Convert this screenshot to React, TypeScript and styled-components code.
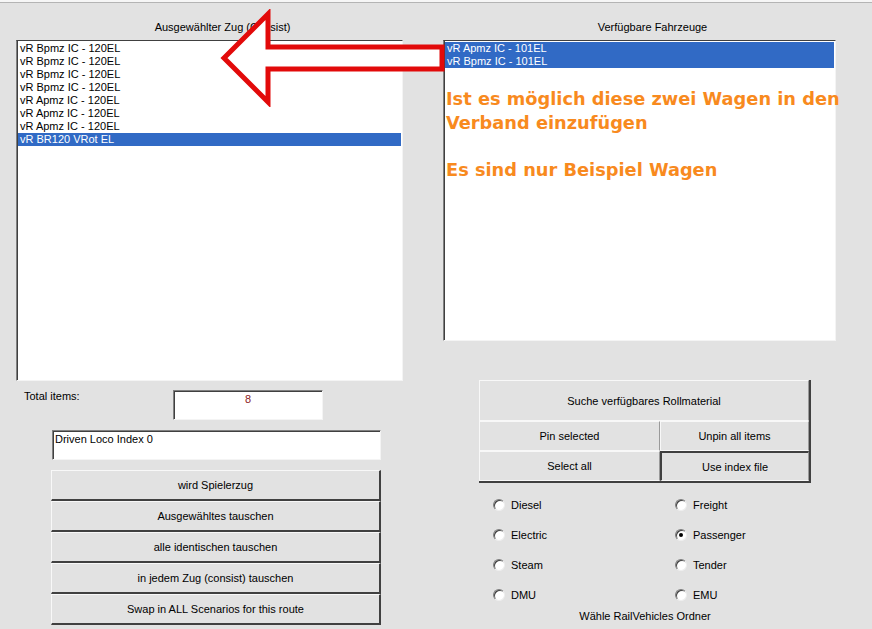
import React from 'react';
import styled, { createGlobalStyle, css } from 'styled-components';

const GlobalStyle = createGlobalStyle`
  html, body {
    margin: 0;
    padding: 0;
    background: #e2e2e2;
  }
  body {
    font-family: "Liberation Sans", Arial, sans-serif;
    font-size: 11px;
    color: #000;
  }
`;

const Window = styled.div`
  position: relative;
  width: 872px;
  height: 629px;
  overflow: hidden;
  background: #e2e2e2;
`;

const TopEdge = styled.div`
  height: 2px;
  background: #f6f6f6;
  border-bottom: 1px solid #b4b4b4;
`;

const Columns = styled.div`
  display: grid;
  grid-template-columns: 387px 393px;
  column-gap: 40px;
  padding-left: 16px;
`;

const Column = styled.div`
  display: flex;
  flex-direction: column;
`;

const PanelTitle = styled.div`
  height: 37px;
  box-sizing: border-box;
  padding: 18px 0 0 26px;
  line-height: 13px;
  text-align: center;
`;

const sunken = css`
  box-sizing: border-box;
  background: #fff;
  border: 1px solid;
  border-color: #808080 #f4f4f4 #f4f4f4 #808080;
  box-shadow: inset 1px 1px 0 #404040;
`;

const ListBox = styled.div<{ $height: number }>`
  ${sunken};
  height: ${(p) => p.$height}px;
  padding: 1px 1px 0;
  box-shadow: inset 1px 0 0 #404040;
  border-top-color: #404040;
`;

const ListItem = styled.div<{ $selected?: boolean }>`
  height: 13px;
  line-height: 13px;
  padding-left: 2px;
  white-space: nowrap;
  ${(p) =>
    p.$selected &&
    css`
      background: #316ac5;
      color: #fff;
    `}
`;

const Note = styled.div`
  margin-top: 19px;
  padding-left: 1px;
  white-space: nowrap;
  font-family: "DejaVu Sans", Verdana, sans-serif;
  font-weight: bold;
  font-size: 17.8px;
  line-height: 23.5px;
  color: #f88a1e;

  & + & {
    margin-top: 23.5px;
  }
`;

const TotalRow = styled.div`
  display: flex;
  margin-top: 9px;
  height: 30px;
`;

const TotalLabel = styled.div`
  width: 157px;
  box-sizing: border-box;
  padding-left: 8px;
  line-height: 13px;
`;

const CountBox = styled.div`
  ${sunken};
  width: 150px;
  height: 30px;
  padding-top: 2px;
  line-height: 13px;
  text-align: center;
  color: #8b1c1c;
`;

const InfoBox = styled.div`
  ${sunken};
  margin: 10px 0 0 36px;
  width: 329px;
  height: 30px;
  padding: 2px 2px;
  line-height: 13px;
`;

const ButtonStack = styled.div`
  display: flex;
  flex-direction: column;
  margin: 10px 0 0 35px;
  width: 330px;
`;

const PushButton = styled.button`
  height: 31px;
  margin: 0;
  padding: 0;
  font: inherit;
  color: #000;
  background: #e2e2e2;
  border: 1px solid;
  border-width: 1px 2px 2px 1px;
  border-color: #f8f8f8 #404040 #404040 #f8f8f8;
`;

const ButtonGroup = styled.div`
  display: grid;
  grid-template-columns: 181px 1fr;
  grid-template-rows: 41px 30px 30px;
  margin: 39px 0 0 36px;
  width: 332px;
  box-sizing: border-box;
  border-right: 2px solid #404040;
  border-bottom: 2px solid #404040;
`;

const GroupButton = styled.button<{ $wide?: boolean; $pressed?: boolean }>`
  margin: 0;
  padding: 0;
  font: inherit;
  color: #000;
  background: #e2e2e2;
  border: 1px solid;
  border-color: #f8f8f8 #9a9a9a #f8f8f8 #f8f8f8;
  grid-column: ${(p) => (p.$wide ? '1 / span 2' : 'auto')};
  ${(p) =>
    p.$pressed &&
    css`
      border-top: 2px solid #404040;
      border-left: 2px solid #404040;
    `}
`;

const RadioGrid = styled.div`
  display: grid;
  grid-template-columns: 182px 1fr;
  grid-auto-rows: 30px;
  margin: 7px 0 0 50px;
`;

const RadioOption = styled.label`
  display: flex;
  align-items: center;
  gap: 6px;
  line-height: 13px;
`;

const RadioDot = styled.span<{ $checked?: boolean }>`
  position: relative;
  width: 12px;
  height: 12px;
  box-sizing: border-box;
  border-radius: 50%;
  background: #fff;
  border: 1px solid;
  border-color: #7c7c7c #eeeeee #eeeeee #7c7c7c;
  box-shadow: inset 1px 1px 0 #404040;

  ${(p) =>
    p.$checked &&
    css`
      &::after {
        content: '';
        position: absolute;
        left: 3px;
        top: 3px;
        width: 4px;
        height: 4px;
        border-radius: 50%;
        background: #000;
      }
    `}
`;

const FolderCaption = styled.div`
  margin: 0 0 0 36px;
  width: 332px;
  line-height: 13px;
  text-align: center;
`;

const Arrow = styled.svg`
  position: absolute;
  left: 218px;
  top: 9px;
  width: 230px;
  height: 98px;
`;

const consist = [
  'vR Bpmz IC - 120EL',
  'vR Bpmz IC - 120EL',
  'vR Bpmz IC - 120EL',
  'vR Bpmz IC - 120EL',
  'vR Apmz IC - 120EL',
  'vR Apmz IC - 120EL',
  'vR Apmz IC - 120EL',
  'vR BR120 VRot EL',
];

const available = ['vR Apmz IC - 101EL', 'vR Bpmz IC - 101EL'];

const swapActions = [
  'wird Spielerzug',
  'Ausgewähltes tauschen',
  'alle identischen tauschen',
  'in jedem Zug (consist) tauschen',
  'Swap in ALL Scenarios for this route',
];

const vehicleTypes: [string, boolean][] = [
  ['Diesel', false],
  ['Freight', false],
  ['Electric', false],
  ['Passenger', true],
  ['Steam', false],
  ['Tender', false],
  ['DMU', false],
  ['EMU', false],
];

export default function App() {
  return (
    <>
      <GlobalStyle />
      <Window>
        <TopEdge />
        <Columns>
          <Column>
            <PanelTitle>Ausgewählter Zug (Consist)</PanelTitle>
            <ListBox $height={341}>
              {consist.map((name, i) => (
                <ListItem key={i} $selected={i === consist.length - 1}>
                  {name}
                </ListItem>
              ))}
            </ListBox>
            <TotalRow>
              <TotalLabel>Total items:</TotalLabel>
              <CountBox>{consist.length}</CountBox>
            </TotalRow>
            <InfoBox>Driven Loco Index 0</InfoBox>
            <ButtonStack>
              {swapActions.map((label) => (
                <PushButton key={label}>{label}</PushButton>
              ))}
            </ButtonStack>
          </Column>

          <Column>
            <PanelTitle>Verfügbare Fahrzeuge</PanelTitle>
            <ListBox $height={301}>
              {available.map((name) => (
                <ListItem key={name} $selected>
                  {name}
                </ListItem>
              ))}
              <Note>
                Ist es möglich diese zwei Wagen in den
                <br />
                Verband einzufügen
              </Note>
              <Note>Es sind nur Beispiel Wagen</Note>
            </ListBox>
            <ButtonGroup>
              <GroupButton $wide>Suche verfügbares Rollmaterial</GroupButton>
              <GroupButton>Pin selected</GroupButton>
              <GroupButton>Unpin all items</GroupButton>
              <GroupButton>Select all</GroupButton>
              <GroupButton $pressed>Use index file</GroupButton>
            </ButtonGroup>
            <RadioGrid>
              {vehicleTypes.map(([label, checked]) => (
                <RadioOption key={label}>
                  <RadioDot $checked={checked} />
                  {label}
                </RadioOption>
              ))}
            </RadioGrid>
            <FolderCaption>Wähle RailVehicles Ordner</FolderCaption>
          </Column>
        </Columns>

        <Arrow viewBox="0 0 230 98">
          <polygon
            points="6,49 50,5 50,38 224,38 224,60 50,60 50,93"
            fill="#fff"
            stroke="#e20a0a"
            strokeWidth="5"
            strokeLinejoin="miter"
          />
        </Arrow>
      </Window>
    </>
  );
}
